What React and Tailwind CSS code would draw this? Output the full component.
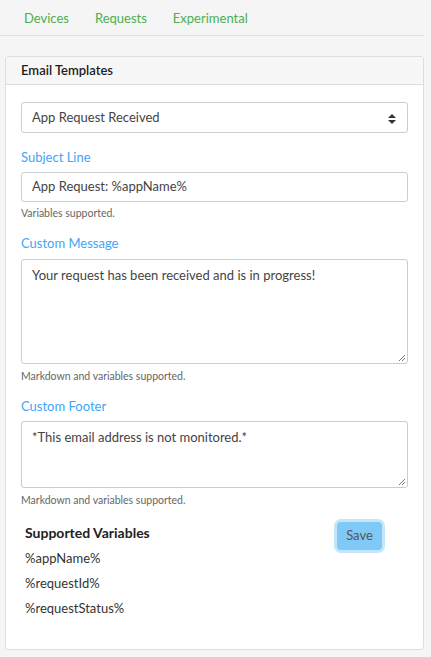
const VARS = ['%appName%', '%requestId%', '%requestStatus%']

function Label({ children, className = '' }) {
  return <div className={`text-[13px] leading-[20px] text-[#42a5f5] ${className}`}>{children}</div>
}

function Help({ children, className = '' }) {
  return <div className={`text-[10.5px] leading-[14px] text-[#666] ${className}`}>{children}</div>
}

function Grip() {
  return (
    <svg className="absolute bottom-[1px] right-[1px]" width="9" height="9" viewBox="0 0 9 9">
      <path d="M8 2 L2 8 M8 5 L5 8" stroke="#777" strokeWidth="1" />
    </svg>
  )
}

export default function App() {
  return (
    <div className="min-h-screen bg-[#f5f5f5] text-[#444]" style={{ fontFamily: 'Lato, "Noto Sans", sans-serif' }}>
      <div className="w-[424px]">
        {/* Tabs */}
        <div className="flex h-[36px] items-center gap-[26px] border-b border-[#e3e3e3] pl-[24px] pt-[2px] text-[13px] text-[#4caf50]">
          <span>Devices</span>
          <span>Requests</span>
          <span>Experimental</span>
        </div>

        <div className="ml-[5px] mt-[20px] w-[419px] rounded-[3px] border border-[#dedede] bg-white">
          <div className="flex h-[28px] items-center border-b border-[#dedede] bg-[#f7f7f7] px-[15px] text-[13px] font-semibold text-[#222]">
            Email Templates
          </div>

          <div className="px-[15px] pt-[17px] pb-[31px]">
            {/* Select */}
            <div className="relative flex h-[31px] items-center rounded-[3px] border border-[#ccc] bg-white pl-[10px] text-[13px] text-[#444]">
              App Request Received
              <svg className="absolute right-[11px] top-[11px]" width="8" height="10" viewBox="0 0 8 10">
                <path d="M4 0 L8 4 H0 Z M0 6 H8 L4 10 Z" fill="#333" />
              </svg>
            </div>

            <Label className="mt-[14px]">Subject Line</Label>
            <div className="mt-[5px] flex h-[30px] items-center rounded-[3px] border border-[#ccc] pl-[10px] text-[13px] text-[#444]">
              App Request: %appName%
            </div>
            <Help className="mt-[4px]">Variables supported.</Help>

            <Label className="mt-[13px]">Custom Message</Label>
            <div className="relative mt-[6px] h-[105px] rounded-[3px] border border-[#ccc] px-[10px] pt-[5px] text-[13px] leading-[20px] text-[#444]">
              Your request has been received and is in progress!
              <Grip />
            </div>
            <Help className="mt-[5px]">Markdown and variables supported.</Help>

            <Label className="mt-[13px]">Custom Footer</Label>
            <div className="relative mt-[5px] h-[67px] rounded-[3px] border border-[#ccc] px-[10px] pt-[5px] text-[13px] leading-[20px] text-[#444]">
              *This email address is not monitored.*
              <Grip />
            </div>
            <Help className="mt-[5px]">Markdown and variables supported.</Help>

            <div className="mt-[11px] flex items-start justify-between pl-[4px] pr-[26px]">
              <div>
                <div className="mt-[5px] text-[14px] font-bold leading-[20px] text-[#222]">Supported Variables</div>
                <div className="mt-[5px] flex flex-col gap-[5px] text-[13px] leading-[20px] text-[#333]">
                  {VARS.map(v => <div key={v}>{v}</div>)}
                </div>
              </div>
              <button className="mt-[4px] h-[28px] w-[45px] rounded-[4px] bg-[#80c9f6] text-[13px] text-[#555] shadow-[0_0_0_3px_rgba(125,200,245,0.45)]">
                Save
              </button>
            </div>
          </div>
        </div>
      </div>
    </div>
  )
}
